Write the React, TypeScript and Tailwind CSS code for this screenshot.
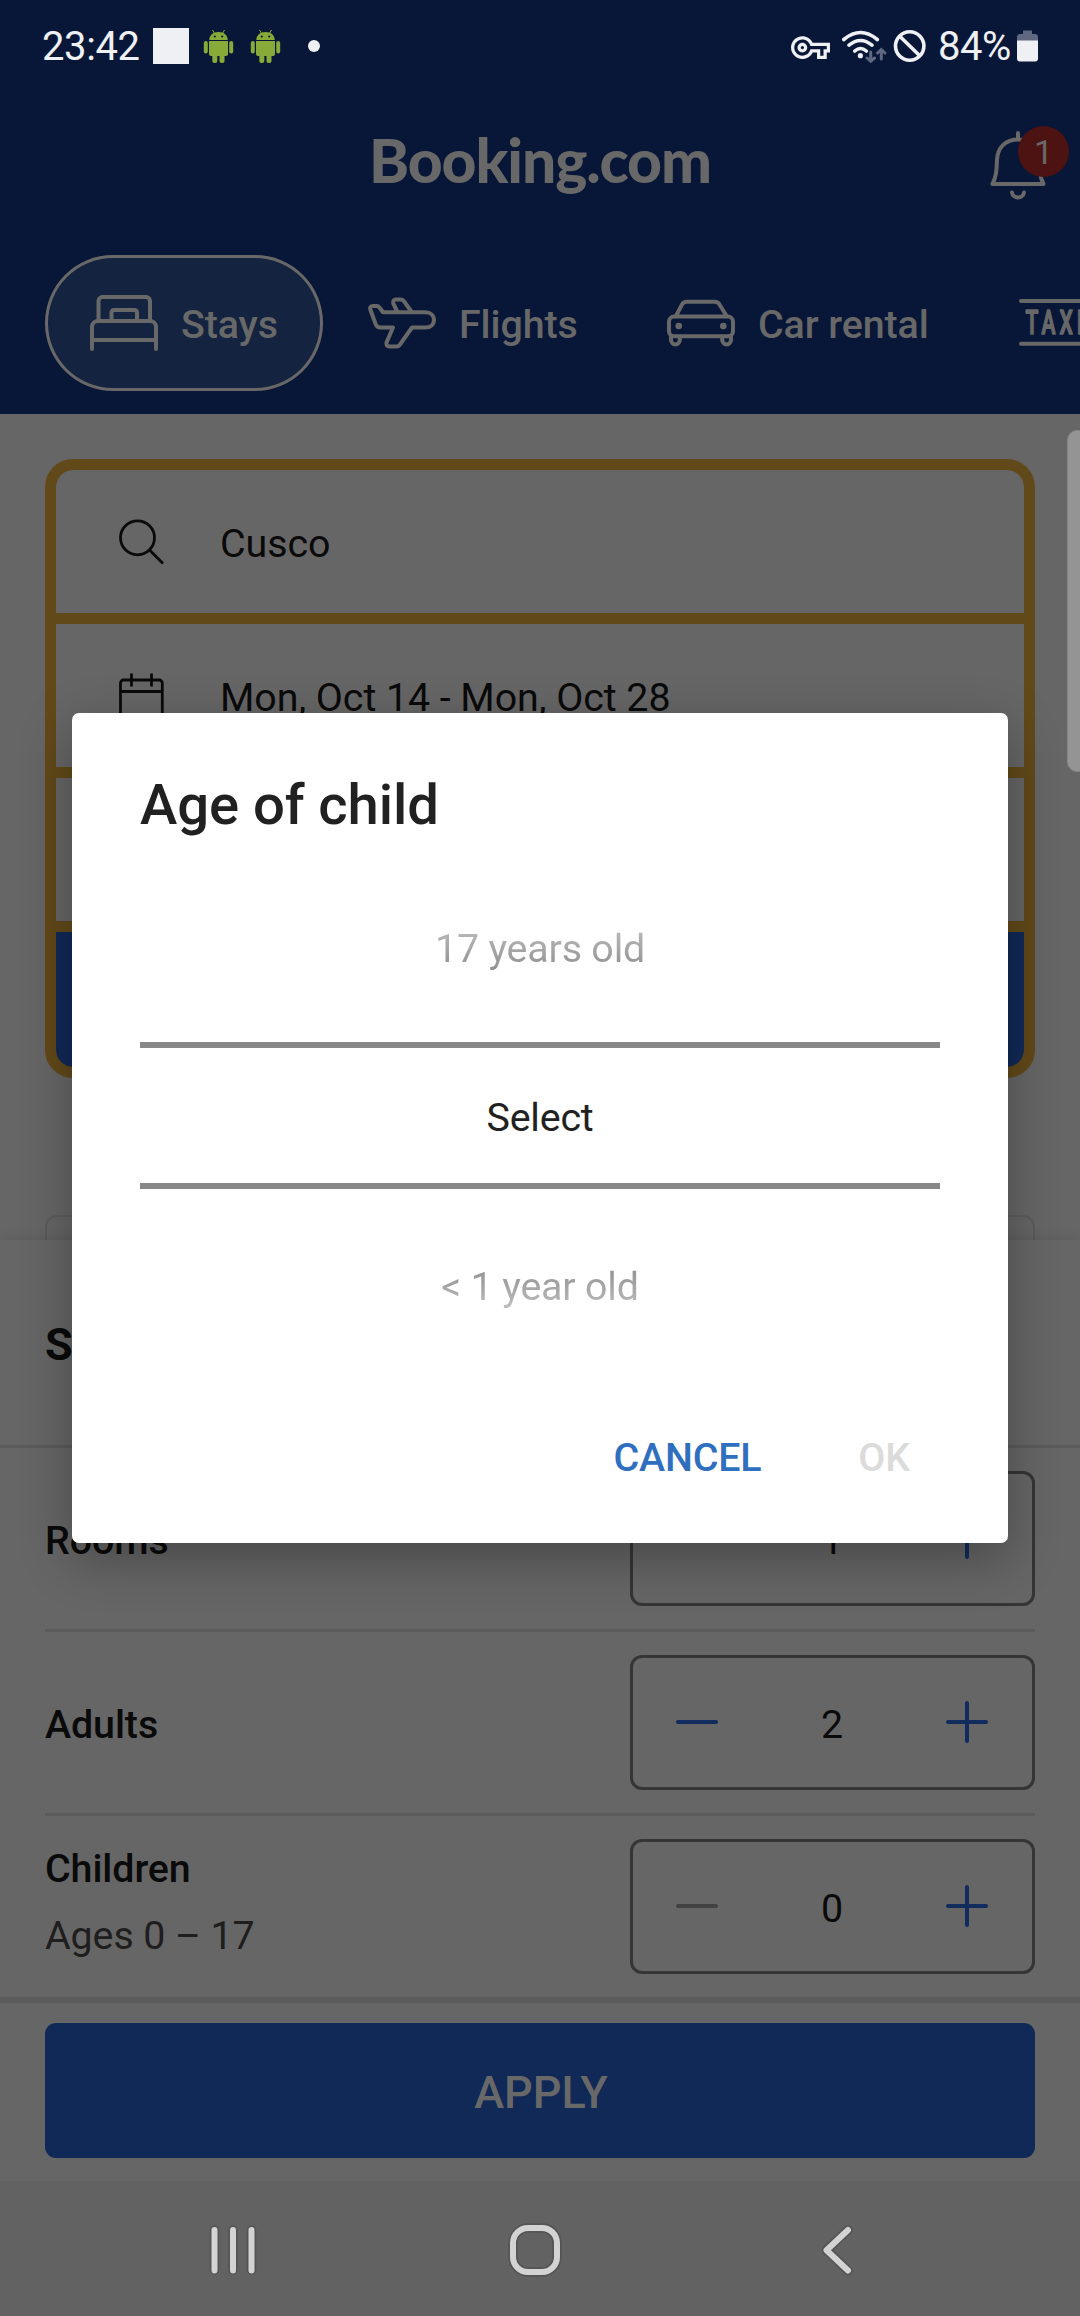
import React from "react";
import { MdOutlineVpnKey } from "react-icons/md";

function AndroidIcon() {
  return (
    <svg className="h-9 w-8 shrink-0" viewBox="0 0 32 36" fill="#88aa38">
      <rect x="0.8" y="13" width="4" height="12.5" rx="2" />
      <rect x="26.2" y="13" width="4" height="12.5" rx="2" />
      <path d="M6 13H25V26a2 2 0 0 1-2 2H8a2 2 0 0 1-2-2Z" />
      <rect x="9.3" y="24" width="5" height="11" rx="2" />
      <rect x="16.5" y="24" width="5" height="11" rx="2" />
      <path d="M6.3 12C6.3 7.500 10 4 15.500 4S24.700 7.500 24.700 12Z" />
      <path d="M11.500 5.500 9.500 2M19.500 5.500 21.500 2" stroke="#88aa38" strokeWidth="1" fill="none" />
      <circle cx="11.800" cy="8.500" r="1.100" fill="#081737" />
      <circle cx="19.200" cy="8.500" r="1.100" fill="#081737" />
    </svg>
  );
}

function StatusBar() {
  return (
    <div className="flex h-[92px] items-center justify-between pl-[42px] pr-[42px] text-[#eff0f3]">
      <div className="flex items-center">
        <span className="w-[111px] text-[40px] leading-[47px] tracking-[-0.4px]">23:42</span>
        <span className="mr-[14px] size-9 bg-[#eff0f3]" />
        <AndroidIcon />
        <span className="w-[15px]" />
        <AndroidIcon />
        <span className="ml-[26px] size-3 rounded-full bg-[#eff0f3]" />
      </div>
      <div className="flex items-center">
        <MdOutlineVpnKey className="mr-[11px] mt-[2px] size-[39px]" />
        <svg className="h-9 w-[46px]" viewBox="841 28 46 36" fill="none" strokeLinecap="round">
          <path
            d="M843.800 39.500Q860.500 25.500 877.300 39.500M849 45.200Q860.500 35.800 872 45.200M854.800 51Q860.500 46 866.300 51"
            stroke="#eff0f3"
            strokeWidth="3.600"
          />
          <circle cx="860.400" cy="55.700" r="2.600" fill="#eff0f3" />
          <path d="M870.700 52V61M867 58L870.700 61.300 874.500 58M881.300 59V50M877.600 53L881.300 49.500 885 53" stroke="#5f6880" strokeWidth="3" />
        </svg>
        <svg className="ml-[6px] h-9 w-[34px]" viewBox="893 27 34 36" fill="none" stroke="#eff0f3" strokeWidth="3.600">
          <circle cx="909.700" cy="45" r="14.200" />
          <path d="M899.500 35 920 55" />
        </svg>
        <span className="ml-[11px] w-[79px] text-[40px] leading-[47px] tracking-[-0.5px]">84%</span>
        <svg className="h-8 w-[21px]" viewBox="0 0 21 32">
          <path d="M6 0.500h9v3.500h3a3 3 0 0 1 3 3V11H0V7a3 3 0 0 1 3-3h3Z" fill="#5f6880" />
          <path d="M0 10.500H21V28.500a3 3 0 0 1-3 3H3a3 3 0 0 1-3-3Z" fill="#eff0f3" />
        </svg>
      </div>
    </div>
  );
}

function BrandBar() {
  return (
    <div className="grid h-[132px] grid-cols-[1fr_auto_1fr] items-center text-[#686868]">
      <span />
      <span className="pt-[3px] font-['Lato'] text-[60.500px] font-black leading-[72px] tracking-[-1.1px]">Booking.com</span>
      <div className="relative mt-2 h-[84px] w-[90px] justify-self-end">
        <svg className="h-[84px] w-[90px]" viewBox="990 120 90 84" fill="none" stroke="#686868" strokeWidth="4" strokeLinecap="round" strokeLinejoin="round">
          <path d="M1018 133V139.500M992.500 184H1043.500C1039.500 176 1039.500 170 1039 160C1038.500 147 1030 139.500 1018 139.500S997.500 147 997 160C996.500 170 996.500 176 992.500 184Z" />
          <path d="M1012 192.500C1013 199 1023 199 1024 192.500" />
        </svg>
        <span className="absolute left-[28px] top-[6px] flex size-[51px] items-center justify-center rounded-full bg-[#4d1212] text-[34px] leading-none">
          1
        </span>
      </div>
    </div>
  );
}

const iconStroke = {
  fill: "none",
  stroke: "currentColor",
  strokeWidth: 4,
  strokeLinecap: "round" as const,
  strokeLinejoin: "round" as const,
};

function BedIcon() {
  return (
    <svg className="h-[68px] w-[68px] shrink-0" viewBox="90 289 68 68" {...iconStroke}>
      <path d="M98.500 319V301a4 4 0 0 1 4-4H146a4 4 0 0 1 4 4V319" />
      <path d="M111.500 319V312.500a2.500 2.500 0 0 1 2.500-2.500H134.500a2.500 2.500 0 0 1 2.500 2.500V319" />
      <path d="M92 349V327a6 6 0 0 1 6-6H150a6 6 0 0 1 6 6V349M92 340H156" />
    </svg>
  );
}

function PlaneIcon() {
  return (
    <svg className="h-[68px] w-[68px] shrink-0" viewBox="368 289 68 68" {...iconStroke}>
      <path d="M383 312.300H425.500C430.500 312.300 434 315.500 434 320S430.500 327.500 425.500 327.500H412L400 344.500Q398.800 346.500 396.500 346.500H389.500Q386 346.500 386.500 342.500L393 327.500H380.500Q377 327.500 375.800 324.500L370.300 309.500Q369.500 306 373 306H376.500Q378.500 306 379.500 307.500Z" />
      <path d="M397 311 393.300 303.500Q392.500 299.500 396 299.500H400.500Q402.500 299.500 403.800 301L411 311" />
    </svg>
  );
}

function CarIcon() {
  return (
    <svg className="h-[68px] w-[68px] shrink-0" viewBox="667 289 68 68" {...iconStroke}>
      <path d="M676.500 315 682 304.500Q683.500 301.800 686.500 301.800H715Q718 301.800 719.500 304.500L726 315" />
      <rect x="669" y="316.600" width="64" height="19.600" rx="5" />
      <path d="M671 337V340a4.400 4.400 0 0 0 8.800 0V337M722.200 337V340a4.400 4.400 0 0 0 8.800 0V337" />
      <circle cx="678.700" cy="326" r="3.300" fill="currentColor" stroke="none" />
      <circle cx="723.300" cy="326" r="3.300" fill="currentColor" stroke="none" />
    </svg>
  );
}

function TaxiIcon() {
  return (
    <svg className="h-[68px] w-[68px] shrink-0" viewBox="1019 289 68 68">
      <path d="M1021 301H1087M1021 343.700H1087" stroke="currentColor" strokeWidth="4" strokeLinecap="round" />
      <text
        x="1025.500"
        y="334.500"
        fill="currentColor"
        stroke="currentColor"
        strokeWidth="1.600"
        strokeLinejoin="round"
        fontFamily="Roboto, sans-serif"
        fontWeight="500"
        fontSize="34"
        letterSpacing="6.500"
        transform="translate(1025.500 0) scale(0.620 1) translate(-1025.500 0)"
      >
        TAXI
      </text>
    </svg>
  );
}

function Tabs() {
  const item = "flex h-[136px] shrink-0 items-center gap-[23px] px-[45px]";
  return (
    <nav className="ml-[45px] flex h-[190px] w-[1035px] overflow-hidden pt-[31px] text-[39.400px] font-medium leading-[46px] tracking-[-0.1px] text-[#686868]">
      <div className={item + " w-[278px] rounded-full bg-[#14233f] shadow-[inset_0_0_0_3px_#686868]"}>
        <BedIcon />
        <span className="pt-1">Stays</span>
      </div>
      <div className={item + " w-[299px]"}>
        <PlaneIcon />
        <span className="pt-1">Flights</span>
      </div>
      <div className={item + " w-[352px]"}>
        <CarIcon />
        <span className="pt-1">Car rental</span>
      </div>
      <div className={item}>
        <TaxiIcon />
      </div>
    </nav>
  );
}

function SearchBox() {
  return (
    <div className="mx-[45px] mt-[45px] flex h-[619px] flex-col gap-[11px] overflow-hidden rounded-[28px] border-[11px] border-[#624919] bg-[#624919] text-[39.400px] leading-[46px] tracking-[-0.060px] text-[#0a0a0a]">
      <div className="flex h-[143px] items-center rounded-t-[17px] bg-[#666666] pl-[63px]">
        <svg className="mr-[55px] h-[46px] w-[46px]" viewBox="119 518.500 46 46" fill="none" stroke="#0a0a0a" strokeWidth="2.800">
          <circle cx="137.500" cy="537.300" r="17" />
          <path d="M149.500 549.500 163 563" />
        </svg>
        <span className="pt-1">Cusco</span>
      </div>
      <div className="flex h-[143px] items-center bg-[#666666] pl-[63px]">
        <svg className="mr-[55px] h-[46px] w-[46px]" viewBox="119 672.500 46 46" fill="none" stroke="#0a0a0a" strokeWidth="2.800">
          <rect x="120.500" y="679.500" width="41.800" height="38" rx="3" />
          <path d="M120.500 691H162.500M131.500 673V686M151.500 673V686" />
        </svg>
        <span className="pt-1">Mon, Oct 14 - Mon, Oct 28</span>
      </div>
      <div className="h-[143px] bg-[#666666]" />
      <div className="flex-1 rounded-b-[17px] bg-[#112957]" />
    </div>
  );
}

function Stepper({ value, canDecrease }: { value: number; canDecrease: boolean }) {
  return (
    <div className="flex h-[135px] w-[405px] items-center justify-between rounded-[12px] border-[3px] border-[#353535] pl-[43px] pr-[44px] text-[#0a0a0a]">
      <span className={canDecrease ? "mb-[1px] h-1 w-[42px] rounded-full bg-[#112b5c]" : "mb-[1px] h-1 w-[42px] rounded-full bg-[#424242]"} />
      <span className="pt-1 text-[39.400px] leading-[46px]">{value}</span>
      <svg className="mb-[1px] h-[42px] w-[42px]" viewBox="0 0 42 42" stroke="#112b5c" strokeWidth="4" strokeLinecap="round">
        <path d="M2 21H40M21 2V40" />
      </svg>
    </div>
  );
}

function OccupancyRow({ label, hint, value, canDecrease, last }: { label: string; hint?: string; value: number; canDecrease: boolean; last?: boolean }) {
  return (
    <div className={last ? "mx-[45px] flex h-[181px] items-center justify-between" : "mx-[45px] flex h-[184px] items-center justify-between border-b-[3px] border-[#5b5b5b]"}>
      <div className="flex flex-col pt-1 text-[39.400px] leading-[46px] tracking-[-0.1px]">
        <span className="font-medium text-[#0a0a0a]">{label}</span>
        {hint && <span className="mb-[13px] mt-[21px] text-[#1e1e1e]">{hint}</span>}
      </div>
      <Stepper value={value} canDecrease={canDecrease} />
    </div>
  );
}

function SystemNav() {
  return (
    <div className="h-[135px] bg-[#626262]">
      <svg className="h-[135px] w-full" viewBox="0 2181 1080 135" fill="none" strokeLinecap="round" strokeLinejoin="round">
        <g stroke="#555555" strokeWidth="9.500">
          <path d="M214.500 2230V2270M233 2230V2270M251.500 2230V2270M848 2230 826.500 2250 848 2270.500" />
          <rect x="513" y="2228" width="44" height="44" rx="15" />
        </g>
        <g stroke="#d3d3d3" strokeWidth="6">
          <path d="M214.500 2230V2270.500M233 2230V2270.500M251.500 2230V2270.500M848 2230 826.500 2250.300 848 2270.500" />
          <rect x="513" y="2228" width="44" height="44" rx="15" />
        </g>
      </svg>
    </div>
  );
}

function AgeDialog() {
  return (
    <div className="absolute left-[72px] top-[713px] flex h-[830px] w-[936px] flex-col rounded-[7px] bg-white px-[68px] pt-[59px] shadow-[0_16px_52px_rgba(0,0,0,0.300)]">
      <h1 className="h-[66px] text-[56.250px] font-medium leading-[66px] tracking-[-0.1px] text-[#212121]">Age of child</h1>
      <div className="mt-[17px] flex flex-col text-[39.400px] leading-[46px] tracking-[-0.2px]">
        <div className="flex h-[187px] items-center justify-center">
          <span className="bg-gradient-to-b from-[#bebebe] to-[#8e8e8e] bg-clip-text text-transparent">17 years old</span>
        </div>
        <div className="flex h-[147px] items-center justify-center border-y-[6px] border-[#888888] pt-1 text-[#212121]">Select</div>
        <div className="flex h-[195px] items-center justify-center">
          <span className="bg-gradient-to-b from-[#8e8e8e] to-[#bebebe] bg-clip-text text-transparent">&lt; 1 year old</span>
        </div>
      </div>
      <div className="flex h-[147px] items-center justify-end gap-[97px] pr-[30px] text-[39.400px] font-medium leading-[46px] tracking-[-0.2px]">
        <button className="text-[#2f6fbf]">CANCEL</button>
        <button className="text-[#dbdbdb]">OK</button>
      </div>
    </div>
  );
}

export default function App() {
  return (
    <div className="relative flex h-[2316px] w-[1080px] flex-col overflow-hidden whitespace-nowrap bg-[#666666] font-['Roboto',sans-serif]">
      <header className="h-[414px] shrink-0 bg-[#081737]">
        <StatusBar />
        <BrandBar />
        <Tabs />
      </header>
      <section className="h-[826px] shrink-0 overflow-hidden">
        <SearchBox />
        <div className="mx-[45px] mt-[137px] h-[60px] rounded-[12px] border-2 border-[#5c5c5c]" />
      </section>
      <section className="relative shrink-0 bg-[#666666] shadow-[0_0_14px_rgba(0,0,0,0.120)]">
        <div className="flex h-[208px] items-center border-b-[3px] border-[#5b5b5b] pl-[45px] pt-[4px] text-[45px] font-bold leading-[53px] text-[#0a0a0a]">
          Select rooms and guests
        </div>
        <OccupancyRow label="Rooms" value={1} canDecrease={true} />
        <OccupancyRow label="Adults" value={2} canDecrease={true} />
        <OccupancyRow label="Children" hint="Ages 0 – 17" value={0} canDecrease={false} last />
        <div className="h-[184px] border-t-[6px] border-[#5b5b5b] px-[45px] pt-[20px]">
          <div className="flex h-[135px] items-center justify-center rounded-[11px] bg-[#112957] pl-[2px] pt-1 text-[45px] font-medium leading-[53px] text-[#686868]">
            APPLY
          </div>
        </div>
        <SystemNav />
      </section>
      <div className="absolute -right-3 top-[430px] h-[342px] w-[25px] rounded-[10px] border border-[#858585] bg-[#949494]" />
      <AgeDialog />
    </div>
  );
}
